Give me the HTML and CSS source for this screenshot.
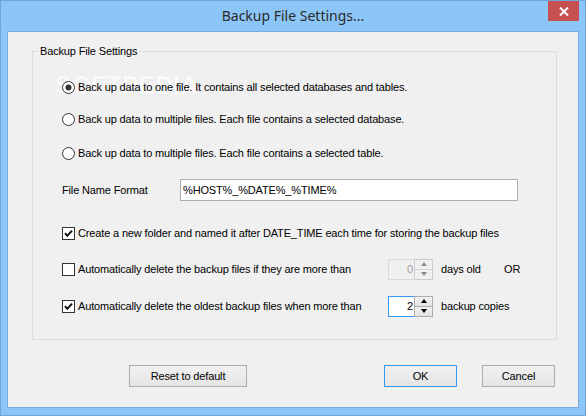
FILE: index.html
```html
<!DOCTYPE html>
<html>
<head>
<meta charset="utf-8">
<link rel="stylesheet" href="styles.css">
</head>
<body>
<div class="window">
  <div class="titlebar">
    <span></span>
    <h1 class="title">Backup File Settings...</h1>
    <button class="close" aria-label="Close">
      <svg width="10" height="9" viewBox="0 0 10 9"><path d="M1 0.5 L9 8.5 M9 0.5 L1 8.5" stroke="#fff" stroke-width="2" fill="none"/></svg>
    </button>
  </div>
  <div class="client">
    <fieldset class="group">
      <legend>Backup File Settings</legend>
      <div class="group-body">
        <span class="watermark">SOFTPEDIA<sup>®</sup></span>
        <label class="row">
          <svg class="box" width="13" height="13" viewBox="0 0 13 13"><circle cx="6.5" cy="6.5" r="6" fill="#fff" stroke="#333"/><circle cx="6.5" cy="6.5" r="3" fill="#333"/></svg>
          <span>Back up data to one file. It contains all selected databases and tables.</span>
        </label>
        <label class="row gap10">
          <svg class="box" width="13" height="13" viewBox="0 0 13 13"><circle cx="6.5" cy="6.5" r="6" fill="#fff" stroke="#333"/></svg>
          <span>Back up data to multiple files. Each file contains a selected database.</span>
        </label>
        <label class="row gap12">
          <svg class="box" width="13" height="13" viewBox="0 0 13 13"><circle cx="6.5" cy="6.5" r="6" fill="#fff" stroke="#333"/></svg>
          <span>Back up data to multiple files. Each file contains a selected table.</span>
        </label>
        <div class="row gap15">
          <span class="field-label">File Name Format</span>
          <span class="textbox">%HOST%_%DATE%_%TIME%</span>
        </div>
        <label class="row gap21">
          <svg class="box" width="13" height="13" viewBox="0 0 13 13"><rect x="0.5" y="0.5" width="12" height="12" fill="#fff" stroke="#333"/><path d="M3 6.2 L5.3 8.8 L10 3.6" stroke="#111" stroke-width="2" fill="none"/></svg>
          <span>Create a new folder and named it after DATE_TIME each time for storing the backup files</span>
        </label>
        <div class="row gap14">
          <svg class="box" width="13" height="13" viewBox="0 0 13 13"><rect x="0.5" y="0.5" width="12" height="12" fill="#fff" stroke="#333"/></svg>
          <span class="check-label">Automatically delete the backup files if they are more than</span>
          <span class="spin disabled"><span class="spin-value">0</span><span class="spin-btns"><span class="spin-btn"><i class="up"></i></span><span class="spin-btn"><i class="down"></i></span></span></span>
          <span class="after-spin days">days old</span>
          <span>OR</span>
        </div>
        <div class="row gap15">
          <svg class="box" width="13" height="13" viewBox="0 0 13 13"><rect x="0.5" y="0.5" width="12" height="12" fill="#fff" stroke="#333"/><path d="M3 6.2 L5.3 8.8 L10 3.6" stroke="#111" stroke-width="2" fill="none"/></svg>
          <span class="check-label">Automatically delete the oldest backup files when more than</span>
          <span class="spin focused"><span class="spin-value">2</span><span class="spin-btns"><span class="spin-btn"><i class="up"></i></span><span class="spin-btn"><i class="down"></i></span></span></span>
          <span class="after-spin">backup copies</span>
        </div>
      </div>
    </fieldset>
    <div class="actions">
      <button class="btn reset">Reset to default</button>
      <button class="btn ok">OK</button>
      <button class="btn cancel">Cancel</button>
    </div>
  </div>
</div>
</body>
</html>
```

FILE: styles.css
```css
html, body {
  margin: 0;
  padding: 0;
}
body {
  width: 586px;
  height: 416px;
  overflow: hidden;
  font-family: "Liberation Sans", Arial, sans-serif;
  font-size: 11px;
  letter-spacing: -0.15px;
  color: #000;
}
.window {
  box-sizing: border-box;
  width: 586px;
  height: 416px;
  background: #8cc6f8;
  border: 1px solid #6ea6da;
  padding: 0 6px 7px 6px;
  display: flex;
  flex-direction: column;
}
.titlebar {
  height: 30px;
  display: grid;
  grid-template-columns: 1fr auto 1fr;
  flex: none;
}
.title {
  margin: 0;
  font-family: "Noto Sans", "Open Sans", sans-serif;
  font-weight: normal;
  font-size: 14px;
  letter-spacing: 0;
  line-height: 29px;
  color: #2a2a2a;
}
.close {
  justify-self: end;
  align-self: start;
  width: 31px;
  height: 20px;
  border: none;
  padding: 0;
  background: #c75050;
  display: flex;
  align-items: center;
  justify-content: center;
}
.client {
  flex: 1;
  background: #f0f0f0;
  border: 1px solid #78ace0;
  display: flex;
  flex-direction: column;
}
.group {
  margin: 13px 21px 0 24px;
  padding: 0;
  border: 1px solid #dcdcdc;
  min-width: 0;
}
.group legend {
  margin-left: 5px;
  padding: 0 2px;
  line-height: 13px;
}
.group-body {
  position: relative;
  z-index: 0;
  padding: 18px 0 22px 29px;
}
.watermark {
  position: absolute;
  z-index: -1;
  left: 22px;
  top: 13px;
  font-family: "Liberation Sans", Arial, sans-serif;
  font-weight: bold;
  font-size: 25px;
  letter-spacing: 0px;
  color: #f9f9f9;
  text-shadow: 0 0 1px #e2e2e2;
}
.watermark sup {
  font-size: 9px;
}
.row {
  height: 22px;
  display: flex;
  align-items: center;
  white-space: nowrap;
}
.gap10 { margin-top: 10px; }
.gap12 { margin-top: 12px; }
.gap14 { margin-top: 14px; }
.gap15 { margin-top: 15px; }
.gap21 { margin-top: 21px; }
.box {
  flex: none;
  margin-right: 3px;
}
.field-label {
  width: 118px;
  flex: none;
}
.textbox {
  box-sizing: border-box;
  width: 338px;
  height: 22px;
  border: 1px solid #abadb3;
  background: #fff;
  padding: 0 2px;
  line-height: 20px;
}
.check-label {
  width: 310px;
  flex: none;
}
.spin {
  box-sizing: border-box;
  width: 45px;
  height: 21px;
  display: flex;
  border: 1px solid #abadb3;
  background: #fff;
  flex: none;
}
.spin.disabled {
  background: #f0f0f0;
  border-color: #d9d9d9;
  color: #a0a0a0;
}
.spin.focused {
  border-color: #3399ff;
}
.spin-value {
  flex: 1;
  text-align: right;
  padding-right: 1px;
  line-height: 19px;
}
.spin-btns {
  width: 17px;
  margin: -1px -1px -1px 0;
  display: flex;
  flex-direction: column;
  border: 1px solid #acacac;
}
.spin.disabled .spin-btns {
  border-color: #cdcdcd;
}
.spin-btn {
  flex: 1;
  display: flex;
  align-items: center;
  justify-content: center;
  background: linear-gradient(#f2f2f2, #e4e4e4);
}
.spin-btn + .spin-btn {
  border-top: 1px solid #acacac;
}
.spin.disabled .spin-btn {
  background: #f0f0f0;
}
.spin.disabled .spin-btn + .spin-btn {
  border-top-color: #d5d5d5;
}
.spin-btn i {
  width: 0;
  height: 0;
  border-left: 3px solid transparent;
  border-right: 3px solid transparent;
}
.spin-btn i.up {
  border-bottom: 4px solid #000;
}
.spin-btn i.down {
  border-top: 4px solid #000;
}
.spin.disabled .spin-btn i.up { border-bottom-color: #8a8a8a; }
.spin.disabled .spin-btn i.down { border-top-color: #8a8a8a; }
.after-spin {
  margin-left: 8px;
}
.after-spin.days {
  width: 63px;
  flex: none;
}
.actions {
  display: flex;
  margin-top: 25px;
  padding-left: 121px;
}
.btn {
  box-sizing: border-box;
  height: 22px;
  border: 1px solid #acacac;
  background: linear-gradient(#f0f0f0, #e5e5e5);
  font-family: "Liberation Sans", Arial, sans-serif;
  font-size: 11px;
  letter-spacing: -0.15px;
  color: #000;
  padding: 0;
}
.btn.reset { width: 118px; }
.btn.ok {
  width: 73px;
  margin-left: 137px;
  border-color: #3399ff;
}
.btn.cancel {
  width: 73px;
  margin-left: 25px;
}
```
